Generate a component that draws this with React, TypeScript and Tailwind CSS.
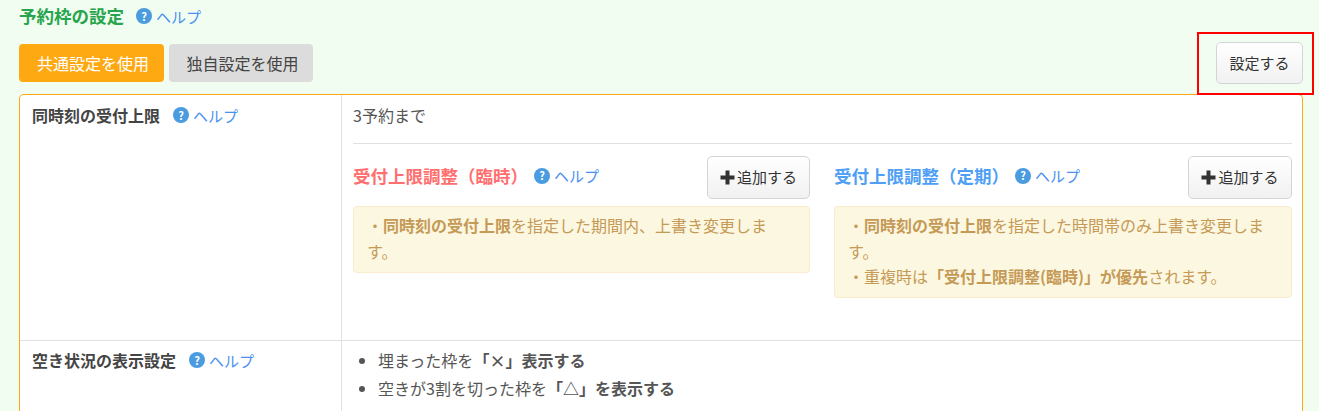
function Help() {
  return (
    <span className="inline-flex items-center gap-[4px] text-[15px] font-normal leading-none text-[#4a90f0]">
      <span className="flex h-[16px] w-[16px] items-center justify-center rounded-full bg-[#4a9be0] text-[11px] font-bold leading-none text-white">?</span>
      <span>ヘルプ</span>
    </span>
  )
}

function AddButton({ narrow }: { narrow?: boolean }) {
  return (
    <button className={`flex h-[43px] items-center justify-center rounded-[5px] border border-[#d4d4d4] bg-gradient-to-b from-white to-[#f1f1f1] text-[15px] text-[#333] ${narrow ? 'w-[103px]' : 'w-[104px]'}`}>
      <svg viewBox="0 0 15 15" className="mr-[2px] h-[15px] w-[15px] fill-[#333]">
        <path d="M5.5 0.5h4v5h5v4h-5v5h-4v-5h-5v-4h5z" />
      </svg>
      追加する
    </button>
  )
}

export default function App() {
  return (
    <div className="relative h-[411px] w-[1319px] overflow-hidden bg-[#f1fdf1] pl-[19px] pr-[16px] pt-[5px] font-['Noto_Sans_CJK_JP',sans-serif] text-[16px] text-[#555]">
      {/* annotation */}
      <div className="absolute left-[1197px] top-[32px] z-10 h-[63px] w-[117px] border-[2px] border-[#ff0000]" />

      <div className="flex h-[22px] items-center gap-[12px]">
        <h2 className="text-[17.5px] font-bold leading-none text-[#28a54e]">予約枠の設定</h2>
        <Help />
      </div>

      <div className="mt-[15px] flex h-[42px] items-start justify-between">
        <div className="mt-[2px] flex gap-[5px]">
          <button className="h-[38px] w-[145px] rounded-[4px] bg-[#ffa912] pl-[3px] text-[16px] text-white">共通設定を使用</button>
          <button className="h-[38px] w-[144px] rounded-[4px] bg-[#dcdcdc] pl-[3px] text-[16px] text-[#444]">独自設定を使用</button>
        </div>
        <button className="h-[42px] w-[87px] rounded-[5px] border border-[#d4d4d4] bg-gradient-to-b from-white to-[#f1f1f1] text-[15px] text-[#333]">設定する</button>
      </div>

      <div className="mt-[10px] rounded-t-[5px] border border-b-0 border-[#ffa912] bg-white">
        <div className="flex h-[246px] border-b border-[#e0e0e0]">
          <div className="h-full w-[322px] shrink-0 border-r border-[#e0e0e0] pl-[12px]">
            <div className="flex h-[40px] items-center gap-[13px]">
              <span className="font-bold text-[#444]">同時刻の受付上限</span>
              <Help />
            </div>
          </div>
          <div className="flex-1 pl-[11px] pr-[10px] pt-[8px]">
            <div className="h-[41px] border-b border-[#e0e0e0] leading-[24px]">3予約まで</div>
            <div className="mt-[12px] grid grid-cols-[457px_458px] gap-[24px]">
              <div>
                <div className="flex h-[43px] items-center justify-between">
                  <div className="flex items-center gap-[6px] pb-[4px]">
                    <span className="text-[17.5px] font-bold leading-none text-[#ff6f6f]">受付上限調整（臨時）</span>
                    <Help />
                  </div>
                  <AddButton narrow />
                </div>
                <div className="mt-[7px] h-[67px] rounded-[4px] border border-[#faebcc] bg-[#fcf7e1] px-[13px] py-[6px] leading-[25.6px] text-[#c59a56]">
                  ・<b>同時刻の受付上限</b>を指定した期間内、上書き変更します。
                </div>
              </div>
              <div>
                <div className="flex h-[43px] items-center justify-between">
                  <div className="flex items-center gap-[6px] pb-[4px]">
                    <span className="text-[17.5px] font-bold leading-none text-[#4fa0f5]">受付上限調整（定期）</span>
                    <Help />
                  </div>
                  <AddButton />
                </div>
                <div className="mt-[7px] h-[92px] rounded-[4px] border border-[#faebcc] bg-[#fcf7e1] px-[13px] py-[6px] leading-[25.6px] text-[#c59a56]">
                  ・<b>同時刻の受付上限</b>を指定した時間帯のみ上書き変更します。
                  <br />
                  ・重複時は<b>「受付上限調整(臨時)」が優先</b>されます。
                </div>
              </div>
            </div>
          </div>
        </div>
        <div className="flex h-[80px]">
          <div className="h-full w-[322px] shrink-0 border-r border-[#e0e0e0] pl-[12px]">
            <div className="flex h-[40px] items-center gap-[13px] pb-[2px]">
              <span className="font-bold text-[#444]">空き状況の表示設定</span>
              <Help />
            </div>
          </div>
          <ul className="list-disc pl-[36px] pt-[5px] leading-[28px]">
            <li>埋まった枠を<b>「×」表示する</b></li>
            <li>空きが3割を切った枠を<b>「△」を表示する</b></li>
          </ul>
        </div>
      </div>
    </div>
  )
}
